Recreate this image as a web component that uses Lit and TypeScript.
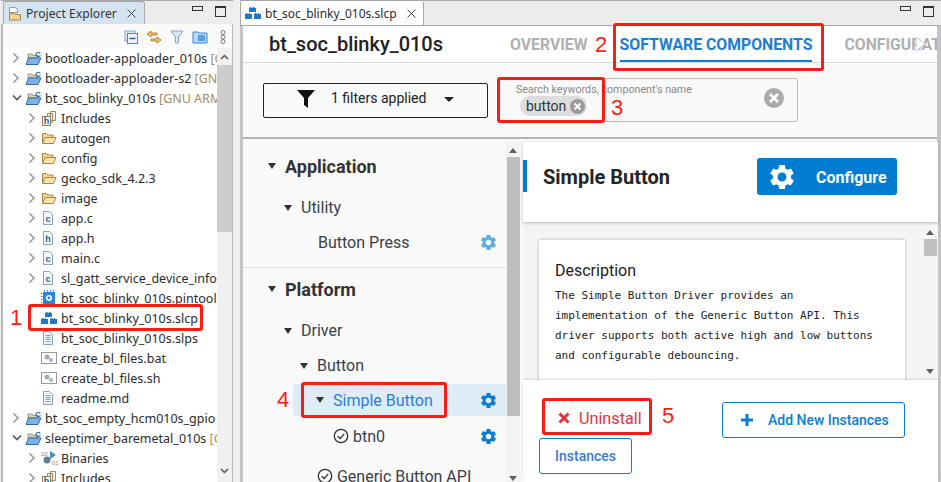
import { LitElement, html, css } from "lit";
import { customElement } from "lit/decorators.js";

const GEAR = "M19.14 12.94c.04-.3.06-.61.06-.94 0-.32-.02-.64-.07-.94l2.03-1.58c.18-.14.23-.41.12-.61l-1.92-3.32c-.12-.22-.37-.29-.59-.22l-2.39.96c-.5-.38-1.03-.7-1.62-.94l-.36-2.54c-.04-.24-.24-.41-.48-.41h-3.84c-.24 0-.43.17-.47.41l-.36 2.54c-.59.24-1.13.57-1.62.94l-2.39-.96c-.22-.08-.47 0-.59.22L2.74 8.87c-.12.21-.08.47.12.61l2.03 1.58c-.05.3-.09.63-.09.94s.02.64.07.94l-2.03 1.58c-.18.14-.23.41-.12.61l1.92 3.32c.12.22.37.29.59.22l2.39-.96c.5.38 1.03.7 1.62.94l.36 2.54c.05.24.24.41.48.41h3.84c.24 0 .44-.17.47-.41l.36-2.54c.59-.24 1.13-.56 1.62-.94l2.39.96c.22.08.47 0 .59-.22l1.92-3.32c.12-.22.07-.47-.12-.61l-2.01-1.58zM12 15.6c-1.98 0-3.6-1.62-3.6-3.6s1.62-3.6 3.6-3.6 3.6 1.62 3.6 3.6-1.62 3.6-3.6 3.6z";

const gear = (size: number, color: string) => html`<svg width=${size} height=${size} viewBox="0 0 24 24"><path d=${GEAR} fill=${color}></path></svg>`;

const bricks = () => html`<svg width="16" height="14" viewBox="0 0 16 14"><path fill="#1f78c8" d="M5 1h1.500v1H8V1h1.500v1H11v4H4V2h1zM0 8h1v-1h1.500v1H4v-1h1v1h2v5H0zM9 8h1v-1h1.500v1H13v-1h1v1h2v5H9z"></path></svg>`;

const project = (badge: string) => html`<svg width="17" height="16" viewBox="0 0 17 16">
  <path d="M3 4h4l1 1.500h5V8H3z" fill="#d9d2b8" stroke="#8a8a70" stroke-width=".8"></path>
  <path d="M1 14.500 3.500 8H16l-3 6.500z" fill="#7fb2e4" stroke="#2a6bb0"></path>
  <text x="10" y="6.500" font-size="8" font-weight="700" font-family="Liberation Sans" fill="#2a5f9e">C</text>
  ${badge === "x" ? html`<rect x="0" y="9" width="7" height="7" fill="#d83a4a"></rect><path d="M2 11l3 3M5 11l-3 3" stroke="#fff"></path>` : ""}
  ${badge === "w" ? html`<path d="M3.500 9 7 15.500H0z" fill="#f2c230" stroke="#a98512" stroke-width=".6"></path>` : ""}
</svg>`;

const folder = () => html`<svg width="16" height="14" viewBox="0 0 16 14">
  <path d="M1.500 12V2.500h4l1.500 1.500h5v2" fill="#f3d48a" stroke="#a8874a"></path>
  <path d="M1.500 12.500 4 6.500h11l-2.500 6z" fill="#f8e2a8" stroke="#a8874a"></path>
</svg>`;

const file = (letter: string) => html`<svg width="14" height="16" viewBox="0 0 14 16">
  <path d="M2.500 1.500h6l3 3v10h-9z" fill="#f4f7fa" stroke="#8ba3b8"></path>
  <text x="7" y="12" text-anchor="middle" font-size="9" font-weight="700" font-family="Liberation Sans" fill="#2a5f8e">${letter}</text>
</svg>`;

const includes = () => html`<svg width="16" height="16" viewBox="0 0 16 16">
  <path d="M9.500 1.500h5v9h-5zM6.500 3.500h5v9h-5z" fill="#f3efe2" stroke="#9a8e6a"></path>
  <rect x="1.500" y="6.500" width="8" height="9" fill="#fbf8ee" stroke="#8c7f58"></rect>
  <text x="5.500" y="14" text-anchor="middle" font-size="9" font-weight="700" font-family="Liberation Sans" fill="#2a5f8e">h</text>
</svg>`;

const doc = () => html`<svg width="14" height="16" viewBox="0 0 14 16">
  <path d="M2.500 1.500h6l3 3v10h-9z" fill="#f0f4f9" stroke="#8ba3b8"></path>
  <path d="M4.500 5.500h5M4.500 7.500h5M4.500 9.500h5M4.500 11.500h5" stroke="#7f9fc0"></path>
</svg>`;

const script = () => html`<svg width="16" height="14" viewBox="0 0 16 14">
  <rect x=".5" y="1.500" width="15" height="11" fill="#fff" stroke="#999"></rect>
  <circle cx="6" cy="6" r="2.500" fill="#aaa"></circle><circle cx="10" cy="9" r="2" fill="#9db4c8"></circle>
</svg>`;

const chip = () => html`<svg width="16" height="16" viewBox="0 0 16 16">
  <rect x="2" y="2" width="12" height="12" fill="#2a86d8"></rect>
  <circle cx="8" cy="8" r="3" fill="#fff"></circle><circle cx="8" cy="8" r="1.400" fill="#2a86d8"></circle>
  <path d="M3.500 0v16M6.500 0v16M9.500 0v16M12.500 0v16M0 3.500h16M0 6.500h16M0 9.500h16M0 12.500h16" stroke="#2a86d8" stroke-dasharray="1.500 14.500"></path>
</svg>`;

const binaries = () => html`<svg width="17" height="16" viewBox="0 0 17 16">
  <path d="M9 1l6 4-6 4z" fill="#4a8cc8"></path>
  <circle cx="6" cy="10" r="3.500" fill="#5c7f9c"></circle>
  <text x="0" y="6" font-size="6" font-family="Liberation Sans" fill="#888">10</text>
  <text x="11" y="15" font-size="6" font-family="Liberation Sans" fill="#888">01</text>
</svg>`;

const chevronRight = html`<svg width="8" height="12" viewBox="0 0 8 12"><path d="M1.500 1.500 6 6l-4.500 4.500" fill="none" stroke="#9c9c9c" stroke-width="1.600"></path></svg>`;
const chevronDown = html`<svg width="10" height="8" viewBox="0 0 10 8"><path d="M1 1.500 5 5.500l4-4" fill="none" stroke="#555" stroke-width="1.600"></path></svg>`;

const check = () => html`<svg class="k" width="16" height="16" viewBox="0 0 16 16"><circle cx="8" cy="8" r="6.700" fill="none" stroke="#333" stroke-width="1.300"></circle><path d="M4.800 8.200 7.200 10.500 11.200 5.800" fill="none" stroke="#333" stroke-width="1.300"></path></svg>`;

const clear = (size: number, color: string) => html`<svg width=${size} height=${size} viewBox="0 0 20 20"><circle cx="10" cy="10" r="10" fill=${color}></circle><path d="M6 6l8 8M14 6l-8 8" stroke="#fff" stroke-width="2.600"></path></svg>`;

type Row = { depth: number; arrow?: "r" | "d"; icon: unknown; name: string; tail?: string };
const rows: Row[] = [
  { depth: 0, arrow: "r", icon: project(""), name: "bootloader-apploader_010s", tail: " [GNU ARM" },
  { depth: 0, arrow: "r", icon: project(""), name: "bootloader-apploader-s2", tail: " [GNU ARM" },
  { depth: 0, arrow: "d", icon: project("x"), name: "bt_soc_blinky_010s", tail: " [GNU ARM v10" },
  { depth: 1, arrow: "r", icon: includes(), name: "Includes" },
  { depth: 1, arrow: "r", icon: folder(), name: "autogen" },
  { depth: 1, arrow: "r", icon: folder(), name: "config" },
  { depth: 1, arrow: "r", icon: folder(), name: "gecko_sdk_4.2.3" },
  { depth: 1, arrow: "r", icon: folder(), name: "image" },
  { depth: 1, arrow: "r", icon: file("c"), name: "app.c" },
  { depth: 1, arrow: "r", icon: file("h"), name: "app.h" },
  { depth: 1, arrow: "r", icon: file("c"), name: "main.c" },
  { depth: 1, arrow: "r", icon: file("c"), name: "sl_gatt_service_device_information.c" },
  { depth: 1, icon: chip(), name: "bt_soc_blinky_010s.pintool" },
  { depth: 1, icon: bricks(), name: "bt_soc_blinky_010s.slcp" },
  { depth: 1, icon: doc(), name: "bt_soc_blinky_010s.slps" },
  { depth: 1, icon: script(), name: "create_bl_files.bat" },
  { depth: 1, icon: script(), name: "create_bl_files.sh" },
  { depth: 1, icon: doc(), name: "readme.md" },
  { depth: 0, arrow: "r", icon: project("w"), name: "bt_soc_empty_hcm010s_gpio" },
  { depth: 0, arrow: "d", icon: project(""), name: "sleeptimer_baremetal_010s", tail: " [GNU ARM" },
  { depth: 1, arrow: "r", icon: binaries(), name: "Binaries" },
  { depth: 1, arrow: "r", icon: includes(), name: "Includes" },
];

@customElement("app-root")
export class AppRoot extends LitElement {
  static styles = css`
    :host { display: block; width: 941px; height: 482px; position: relative; overflow: hidden; background: #f0f0f0; font-family: Roboto, sans-serif; color: #333; }
    .page { display: flex; height: 482px; }
    svg { display: block; flex: none; }

    .left { width: 232px; margin-left: 1px; flex: none; display: flex; flex-direction: column; height: 482px; }
    .strip { height: 24px; flex: none; display: flex; justify-content: space-between; border-top: 1px solid #a8a8a8; background: #ececec; box-sizing: border-box; }
    .ltab { width: 142px; margin-left: 2px; display: flex; align-items: center; padding-left: 4px; gap: 4px; box-sizing: border-box; background: #d3e3f1; border: 1px solid #a8a8a8; border-bottom: none; border-radius: 3px 3px 0 0; font: 12.200px "Noto Sans", sans-serif; color: #333; }
    .x { margin-left: 6px; }
    .win { display: flex; gap: 12px; align-items: flex-start; padding: 5px 7px 0 0; }
    .min { width: 9px; height: 3px; border: 1px solid #333; }
    .max { width: 9px; height: 8px; border: 1px solid #333; border-top-width: 2px; }
    .lbody { flex: 1; min-height: 0; background: #fff; border-left: 2px solid #b8b8b8; border-right: 1px solid #b8b8b8; display: flex; flex-direction: column; }
    .tools { height: 24px; flex: none; display: flex; justify-content: flex-end; align-items: center; gap: 8px; padding: 2px 6px 0 0; box-sizing: border-box; background: #fafafa; }
    .tools .dots { margin-left: 4px; }
    .treewrap { flex: 1; min-height: 0; display: flex; }
    .tree { flex: 1; min-width: 0; overflow: hidden; }
    .row { height: 20px; display: flex; align-items: center; white-space: nowrap; font: 12.500px "Noto Sans", sans-serif; color: #2b2b2b; }
    .d0 { padding-left: 9px; }
    .d1 { padding-left: 25px; }
    .arrow { width: 13px; flex: none; display: flex; justify-content: flex-start; }
    .ic { width: 20px; flex: none; display: flex; justify-content: flex-start; }
    .tail { color: #a28c5a; }
    .lscroll { width: 15px; flex: none; background: #f0f0f0; display: flex; flex-direction: column; align-items: center; }
    .lscroll .up { margin-top: 6px; }
    .lscroll .dn { margin-bottom: 8px; }
    .lthumb { width: 15px; height: 167px; background: #cdcdcd; margin-top: 5px; }
    .tri-u { width: 0; height: 0; border: 4px solid transparent; border-bottom: 5px solid #606060; border-top: none; }
    .tri-d { width: 0; height: 0; border: 4px solid transparent; border-top: 5px solid #606060; border-bottom: none; }
    .sp { flex: 1; }

    .right { margin-left: 7px; width: 701px; flex: none; display: flex; flex-direction: column; height: 482px; }
    .rstrip { height: 26px; flex: none; display: flex; justify-content: space-between; background: #ececec; border-top: 1px solid #a8a8a8; border-bottom: 1px solid #a8a8a8; box-sizing: border-box; }
    .rtab { width: 184px; height: 24px; display: flex; align-items: center; padding-left: 4px; gap: 4px; box-sizing: border-box; background: #fff; border-right: 1px solid #a8a8a8; border-left: 1px solid #a8a8a8; border-radius: 3px 3px 0 0; font: 12px "Noto Sans", sans-serif; color: #2b2b2b; }
    .rbody { flex: 1; min-height: 0; border-left: 3px solid #c4c4c4; border-right: 4px solid #c4c4c4; display: flex; flex-direction: column; background: #f9f9f9; }
    .head { height: 37px; flex: none; background: #fff; border-bottom: 1px solid #ddd; display: flex; align-items: center; overflow: hidden; box-sizing: border-box; padding-left: 26px; position: relative; }
    .title { font-size: 20px; font-weight: 500; color: #222; width: 241px; flex: none; }
    .navs { display: flex; gap: 32px; white-space: nowrap; font-size: 15.800px; font-weight: 700; color: #b0b0b0; }
    .nav.on { color: #1a7ed4; position: relative; }
    .nav.on::after { content: ""; position: absolute; left: 0; right: 0; top: 25px; height: 2px; background: #0a7dd6; }
    .more { position: absolute; left: 672px; top: 10px; }
    .filters { height: 76px; flex: none; border-bottom: 2px solid #b5b5b5; box-sizing: border-box; display: flex; align-items: flex-start; padding: 15px 0 0 20px; gap: 10px; }
    .fbtn { width: 225px; height: 35px; margin-top: 5px; border: 1px solid #222; border-radius: 2px; box-sizing: border-box; display: flex; align-items: center; padding: 0 0 3px 33px; font-size: 14px; color: #222; background: #fafafa; }
    .fbtn .t { margin: 0 0 2px 16px; font-weight: 400; }
    .fbtn .c { margin-left: 18px; width: 0; height: 0; border: 5px solid transparent; border-top: 5px solid #222; border-bottom: none; }
    .search { width: 300px; height: 44px; border: 1px solid #bbb; border-radius: 3px; box-sizing: border-box; padding: 5px 0 0 17px; display: flex; justify-content: space-between; }
    .sl { font-size: 10.700px; color: #8a8a8a; line-height: 12px; }
    .chip { display: inline-flex; align-items: center; gap: 4px; height: 20px; margin: 0 0 0 4px; padding: 0 2px 0 6px; background: #ddd; border-radius: 10px; font-size: 14px; color: #333; }
    .sclear { margin: 4px 13px 0 0; }
    .split { flex: 1; min-height: 0; display: flex; }
    .comps { width: 263px; flex: none; overflow: hidden; padding-top: 12px; box-sizing: border-box; }
    .ci { display: flex; align-items: center; white-space: nowrap; color: #3a3f4a; }
    .tri { width: 0; height: 0; border: 4.500px solid transparent; border-top: 6px solid #333; border-bottom: none; flex: none; margin-right: 9px; }
    .h1 { height: 30px; padding-left: 25px; font-size: 18px; font-weight: 700; color: #333; }
    .h2 { height: 35px; padding-left: 41px; font-size: 16px; margin-top: 9px; }
    .h3 { height: 35px; margin-bottom: 1px; padding-left: 57px; font-size: 16px; }
    .leaf { height: 35px; padding-left: 75px; font-size: 16px; justify-content: space-between; padding-right: 8px; }
    .sep { height: 1px; background: #e0e0e0; margin: 7px 0 6px; }
    .sel { height: 32px; margin-left: 50px; padding: 0 8px 0 23px; background: #dfecf5; justify-content: space-between; font-size: 16px; color: #2a7de1; }
    .sel .l, .inst .l, .api { display: flex; align-items: center; }
    .inst { height: 40px; padding: 0 8px 0 90px; justify-content: space-between; font-size: 16px; }
    .api { height: 40px; padding-left: 74px; font-size: 16px; }
    .cscroll { width: 14px; flex: none; background: #f4f4f4; display: flex; flex-direction: column; align-items: center; padding-top: 9px; box-sizing: border-box; }
    .cthumb { width: 13px; height: 259px; background: #bdbdbd; margin-top: 4px; }
    .cscroll .tri-d { margin-top: 60px; }
    .detail { width: 415px; margin-left: 3px; flex: none; display: flex; flex-direction: column; padding-top: 3px; box-sizing: border-box; }
    .dh { height: 80px; flex: none; background: #fff; box-shadow: 0 1px 3px rgba(0,0,0,.25); display: flex; align-items: flex-start; box-sizing: border-box; padding-top: 18px; position: relative; z-index: 1; }
    .bar { width: 4px; height: 32px; background: #007cd3; flex: none; }
    .dt { margin-left: 16px; width: 214px; flex: none; font-size: 20px; font-weight: 700; color: #252525; line-height: 34px; }
    .cfg { width: 140px; height: 37px; margin-top: -2px; background: #007cd3; border-radius: 3px; display: flex; align-items: center; padding-left: 10px; box-sizing: border-box; color: #fff; font-size: 16px; font-weight: 700; gap: 19px; }
    .cfg span { padding-top: 1px; }
    .dmid { height: 158px; flex: none; display: flex; background: #f5f5f5; overflow: hidden; }
    .dm { flex: 1; padding: 18px 17px 0 16px; min-width: 0; }
    .card { background: #fff; box-shadow: 0 0 3px rgba(0,0,0,.3); height: 200px; padding: 20px 16px; box-sizing: border-box; }
    .card h3 { margin: 0 0 4px; font-size: 16px; font-weight: 400; color: #222; line-height: 22px; }
    .card p { margin: 0; font: 11px/20px "DejaVu Sans Mono", monospace; color: #222; white-space: pre-line; }
    .dscroll { width: 16px; flex: none; display: flex; flex-direction: column; align-items: center; padding-top: 8px; box-sizing: border-box; }
    .dthumb { width: 13px; height: 17px; background: #c0c0c0; margin-top: 4px; }
    .dscroll .tri-d { margin-bottom: 6px; }
    .dact { flex: 1; min-height: 0; background: #fff; box-shadow: 0 -1px 2px rgba(0,0,0,.12); padding: 22px 33px 0 16px; position: relative; display: flex; flex-wrap: wrap; justify-content: space-between; align-content: flex-start; }
    .un { height: 36px; display: flex; align-items: center; gap: 9px; padding-left: 19px; width: 130px; box-sizing: border-box; font-size: 16.200px; color: #e8323c; margin-top: -2px; }
    .btn { height: 36px; border: 1px solid #0a7dd6; border-radius: 3px; box-sizing: border-box; display: flex; align-items: center; color: #0a7dd6; font-size: 14px; font-weight: 500; background: #fff; }
    .add { width: 183px; padding-left: 18px; gap: 15px; }
    .ins { width: 93px; justify-content: center; color: #3a7bd0; }
    .brk { flex-basis: 100%; height: 0; }

    .mark { position: absolute; border: 3px solid #ff1a12; border-radius: 3px; box-sizing: border-box; pointer-events: none; z-index: 5; }
    .num { position: absolute; color: #ff1a12; font: 22px/26px "Liberation Sans", sans-serif; z-index: 5; }
  `;

  renderRow(r: Row) {
    return html`<div class="row d${r.depth}">
      <span class="arrow">${r.arrow === "r" ? chevronRight : r.arrow === "d" ? chevronDown : ""}</span>
      <span class="ic">${r.icon}</span>
      <span>${r.name}<span class="tail">${r.tail ?? ""}</span></span>
    </div>`;
  }

  render() {
    const closeX = html`<svg class="x" width="9" height="9" viewBox="0 0 9 9"><path d="M.5.5l8 8M8.500.5l-8 8" stroke="#444"></path></svg>`;
    const winButtons = html`<span class="win"><span class="min"></span><span class="max"></span></span>`;
    return html`
      <div class="page">
        <div class="left">
          <div class="strip">
            <div class="ltab">
              <svg width="14" height="15" viewBox="0 0 14 15"><path d="M1.500 1.500h6l2 2v3h-8z" fill="#fff" stroke="#999"></path><path d="M1.500 14V7.500h4l1 1h6V14z" fill="#f3d48a" stroke="#a8874a"></path></svg>
              <span>Project Explorer</span>${closeX}
            </div>
            ${winButtons}
          </div>
          <div class="lbody">
            <div class="tools">
              <svg width="14" height="14" viewBox="0 0 14 14"><rect x="1" y="1" width="10" height="10" fill="#dce8f4" stroke="#8aa8c8"></rect><rect x="3.500" y="3.500" width="10" height="10" fill="#eef4fa" stroke="#5b86b4"></rect><path d="M5.500 8.500h6" stroke="#2a5f9e" stroke-width="1.500"></path></svg>
              <svg width="16" height="14" viewBox="0 0 16 14"><path d="M5 1 1 4l4 3V5h6V3H5zM11 7l4 3-4 3v-2H5V9h6z" fill="#f3c879" stroke="#b07a20" stroke-width=".9"></path></svg>
              <svg width="14" height="14" viewBox="0 0 14 14"><path d="M1 1h12L8.500 7v6h-3V7z" fill="#dbe8f4" stroke="#8aa4bc"></path></svg>
              <svg width="16" height="14" viewBox="0 0 16 14"><path d="M1 2h5l1 1h8v10H1z" fill="#bcd8f2" stroke="#3d86d0"></path><rect x="6" y="5" width="7" height="6" fill="#5a9ee0"></rect></svg>
              <svg class="dots" width="6" height="14" viewBox="0 0 6 14"><circle cx="3" cy="2.500" r="2" fill="#fff" stroke="#777"></circle><circle cx="3" cy="7" r="2" fill="#fff" stroke="#777"></circle><circle cx="3" cy="11.500" r="2" fill="#fff" stroke="#777"></circle></svg>
            </div>
            <div class="treewrap">
              <div class="tree">${rows.map((r) => this.renderRow(r))}</div>
              <div class="lscroll">
                <svg class="up" width="9" height="6" viewBox="0 0 9 6"><path d="M1 5 4.500 1.500 8 5" fill="none" stroke="#555" stroke-width="1.500"></path></svg>
                <div class="lthumb"></div>
                <div class="sp"></div>
                <svg class="dn" width="9" height="6" viewBox="0 0 9 6"><path d="M1 1 4.500 4.500 8 1" fill="none" stroke="#555" stroke-width="1.500"></path></svg>
              </div>
            </div>
          </div>
        </div>

        <div class="right">
          <div class="rstrip">
            <div class="rtab">${bricks()}<span>bt_soc_blinky_010s.slcp</span>${closeX}</div>
            ${winButtons}
          </div>
          <div class="rbody">
            <div class="head">
              <div class="title">bt_soc_blinky_010s</div>
              <div class="navs">
                <span class="nav">OVERVIEW</span>
                <span class="nav on">SOFTWARE COMPONENTS</span>
                <span class="nav">CONFIGURATION TOOLS</span>
              </div>
              <svg class="more" width="12" height="16" viewBox="0 0 12 16"><path d="M1 1l9 7-9 7z" fill="#fff" stroke="#c8c8c8"></path></svg>
            </div>
            <div class="filters">
              <div class="fbtn">
                <svg width="18" height="20" viewBox="0 0 18 20"><path d="M0 1h18l-7 8v10l-4-3V9z" fill="#111"></path></svg>
                <span class="t">1 filters applied</span><span class="c"></span>
              </div>
              <div class="search">
                <div>
                  <div class="sl">Search keywords, component's name</div>
                  <span class="chip">button ${clear(15, "#9a9a9a")}</span>
                </div>
                <div class="sclear">${clear(20, "#aaa")}</div>
              </div>
            </div>
            <div class="split">
              <div class="comps">
                <div class="ci h1"><span class="tri"></span>Application</div>
                <div class="ci h2"><span class="tri"></span>Utility</div>
                <div class="ci leaf"><span>Button Press</span>${gear(19, "#5aaee6")}</div>
                <div class="sep"></div>
                <div class="ci h1"><span class="tri"></span>Platform</div>
                <div class="ci h2"><span class="tri"></span>Driver</div>
                <div class="ci h3"><span class="tri"></span>Button</div>
                <div class="ci sel"><span class="l"><span class="tri"></span>Simple Button</span>${gear(19, "#0a7dd6")}</div>
                <div class="ci inst"><span class="l">${check()}&nbsp;btn0</span>${gear(19, "#0a7dd6")}</div>
                <div class="ci api">${check()}&nbsp;Generic Button API</div>
              </div>
              <div class="cscroll">
                <span class="tri-u"></span>
                <div class="cthumb"></div>
                <span class="tri-d"></span>
              </div>
              <div class="detail">
                <div class="dh">
                  <span class="bar"></span>
                  <span class="dt">Simple Button</span>
                  <div class="cfg">${gear(30, "#fff")}<span>Configure</span></div>
                </div>
                <div class="dmid">
                  <div class="dm">
                    <div class="card">
                      <h3>Description</h3>
                      <p>The Simple Button Driver provides an
implementation of the Generic Button API. This
driver supports both active high and low buttons
and configurable debouncing.</p>
                    </div>
                  </div>
                  <div class="dscroll">
                    <span class="tri-u"></span>
                    <div class="dthumb"></div>
                    <div class="sp"></div>
                    <span class="tri-d"></span>
                  </div>
                </div>
                <div class="dact">
                  <div class="un">
                    <svg width="12" height="12" viewBox="0 0 12 12"><path d="M1.500 1.500l9 9M10.500 1.500l-9 9" stroke="#e8323c" stroke-width="3"></path></svg>
                    <span>Uninstall</span>
                  </div>
                  <div class="btn add">
                    <svg width="12" height="12" viewBox="0 0 12 12"><path d="M6 0v12M0 6h12" stroke="#0a7dd6" stroke-width="3"></path></svg>
                    <span>Add New Instances</span>
                  </div>
                  <div class="brk"></div>
                  <div class="btn ins">Instances</div>
                </div>
              </div>
            </div>
          </div>
        </div>
      </div>

      <div class="mark" style="left:28px;top:304px;width:175px;height:27px"></div>
      <div class="mark" style="left:613px;top:23px;width:211px;height:48px"></div>
      <div class="mark" style="left:497px;top:77px;width:108px;height:46px"></div>
      <div class="mark" style="left:301px;top:382px;width:146px;height:36px"></div>
      <div class="mark" style="left:542px;top:398px;width:110px;height:37px"></div>
      <span class="num" style="left:10px;top:305px">1</span>
      <span class="num" style="left:595px;top:32px">2</span>
      <span class="num" style="left:611px;top:95px">3</span>
      <span class="num" style="left:277px;top:387px">4</span>
      <span class="num" style="left:662px;top:403px">5</span>
    `;
  }
}
